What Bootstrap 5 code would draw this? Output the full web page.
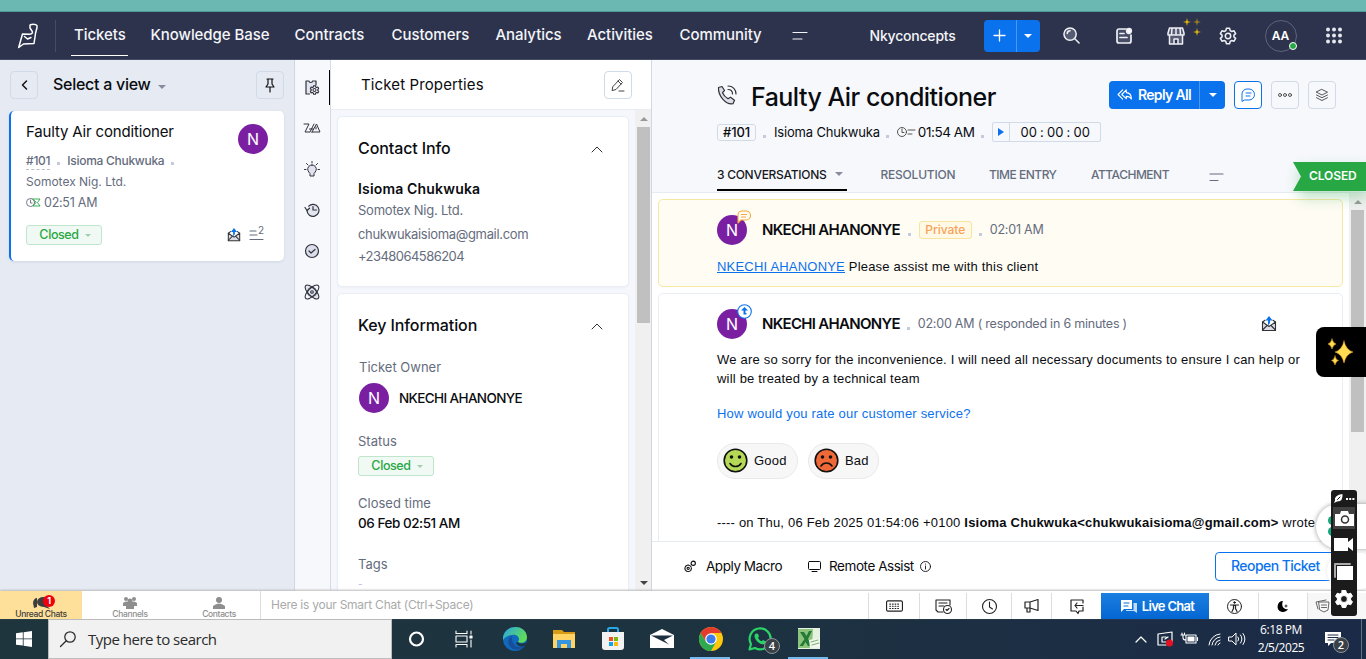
<!DOCTYPE html>
<html lang="en">
<head>
<meta charset="utf-8">
<title>Faulty Air conditioner - Ticket #101</title>
<meta name="viewport" content="width=device-width, initial-scale=1">
<link rel="stylesheet" href="https://cdn.jsdelivr.net/npm/bootstrap@5.3.0/dist/css/bootstrap.min.css">
<style>
body{width:1366px;height:659px;overflow:hidden;font:400 13px/20px Inter,"Liberation Sans",sans-serif;color:#0a0c10;background:#fff}
svg{display:block;flex:none;fill:none;stroke:currentColor;stroke-linecap:round;stroke-linejoin:round;overflow:visible}
svg:not([stroke-width]){stroke-width:1.2}
/* spacing steps between Bootstrap's */
.ml1{margin-left:1px}.ml6{margin-left:6px}.ml7{margin-left:7px}.ml8{margin-left:8px}.ml9{margin-left:9px}.ml10{margin-left:10px}.ml15{margin-left:15px}
.mt5{margin-top:5px}.mt6{margin-top:6px}.mt17{margin-top:17px}.mt18{margin-top:18px}.mt21{margin-top:21px}.mt22{margin-top:22px}
.mid{display:flex;align-items:center;justify-content:center}
.soft{color:#656c7d}
.strip{height:12px;background:#6bb8b3;border-bottom:1px solid #4f9a98}
.topbar{height:48px;background:#2d334d;color:#fff;border-bottom:1px solid #444b64}
.logo{width:56px;height:32px;border-right:1px solid #454b63;padding-left:17px}
.mainnav{display:grid;grid-template-columns:76.500px 144px 97px 104px 91.500px 92.500px 113px 30px;margin-left:18px;font-size:15px;font-weight:500;letter-spacing:-.05px;height:46px;line-height:44px;white-space:nowrap;color:#f4f5f8}
.mainnav .active{position:relative}
.mainnav .active:after{content:"";position:absolute;left:-3px;width:57px;bottom:3px;height:1px;background:#fff}
.org{width:114px;margin-left:47px;font-size:14px;font-weight:500;letter-spacing:-.2px;color:#f4f5f8}
.btn-split{display:flex;background:#0b72ed;border-radius:4px;overflow:hidden;color:#fff}
.btn-split>span+span{border-left:1px solid #4b97f3}
.btn-add{width:56px;height:32px;margin-right:6px}
.btn-add>span:first-child{width:32px}
.topic{width:52px;color:#f0f0f5;display:flex;justify-content:center}
.glints{position:absolute;left:32px;top:-10px}
.avatar-me{width:32px;height:32px;border:1px solid #5d637b;border-radius:50%;font-weight:600;font-size:12px;position:relative;margin:0 29px 0 11px}
.online{position:absolute;right:-1px;bottom:1px;width:8px;height:8px;border-radius:50%;background:#28a745;border:1px solid #fff}
.caret{width:0;height:0;border:4px solid transparent;border-top-color:#fff;border-bottom:0;flex:none}
.caret.dim{border-top-color:#868c9b}
.work{height:531px}
.listpane{width:295px;background:#e6eaf3;border-right:1px solid #cdd7e4;padding:11px 10px 0 9px}
.viewname{font-size:16px;font-weight:500;letter-spacing:-.27px;line-height:18px;padding-bottom:2px}
.sqbtn{width:28px;height:28px;border:1px solid #d1dae7;border-radius:4px;flex:none;color:#444;display:flex;align-items:center;justify-content:center}
.sqbtn.dark{color:#111}
.sqbtn.primary{border-color:#0b72ed;color:#0b72ed;background:#fff}
.ticketcard{height:150px;margin-top:12px;background:#fff;border-radius:5px;border-left:2px solid #0b72ed;padding:10px 15px 0 15px;box-shadow:0 1px 3px #cfd6e4;position:relative}
.ticketcard .subj{font-size:15px;line-height:22px;letter-spacing:-.17px}
.ticketcard .av{position:absolute;right:16px;top:13px}
.ticketcard .meta{font-size:12px;line-height:21px}
.ticketcard .who1{margin-top:8px;line-height:20px;letter-spacing:-.28px;font-weight:500;gap:7px}
.ticketcard .who1 .dot{margin-top:5px}
.ticketcard .id{border-bottom:1px dashed #b7bdcb;line-height:16px}
.ticketcard .due{gap:4px;font-size:12.500px;letter-spacing:-.25px}
.ticketcard .cardfoot{margin-top:12px}
.ticketcard .sup{font-size:10px;margin-top:-10px;margin-left:-2px}
.sentmark{margin-left:125px;color:#333}
.av{width:30px;height:30px;border-radius:50%;background:#7b1fa2;color:#fff;font-size:16px;flex:none;position:relative;display:flex;align-items:center;justify-content:center}
.dot{width:3px;height:3px;background:#c6cadf;flex:none;margin-top:8px}
.closedpill{width:76px;height:20px;border:1px solid #bfe5cb;background:#f0f9f3;border-radius:3px;color:#28a745;font-weight:500;font-size:12.500px;letter-spacing:-.4px;line-height:17px;padding:0 0 1px 2px;gap:6px}
.closedpill .caret{border-width:3px;border-bottom:0;border-top-color:#9fcfae;margin-top:2px}
.rail{width:36px;background:#f7f8fc;border-right:1px solid #d3dbe8;position:relative;padding:17px 2px 0 0;color:#30333d}
.rail>svg{margin-bottom:21px}
.rail:before{content:"";position:absolute;right:0;top:10px;height:35px;width:1px;background:#000}
.props{width:321px;background:#f5f7fc;border-right:1px solid #d0d8e6}
.props-head{height:50px;background:#fff;border-bottom:1px solid #e8edf4;padding:11px 19px 0 30px;font-size:15px;line-height:28px;letter-spacing:.12px}
.props-body{height:481px;overflow:hidden}
.props-list{padding:6px 6px 0}
.panel{width:292px;background:#fff;border:1px solid #e9eef5;border-radius:5px;padding:21px 20px 0;box-shadow:0 1px 2px #eceff5}
.panel.p1{height:171px}
.panel.p2{height:330px;margin-top:6px}
.panel h2{font-size:16px;font-weight:500;line-height:20px;margin:0;letter-spacing:-.1px}
.panel .chev{margin:2px 5px 0 0;color:#333}
.cname{font-size:14px;font-weight:600;letter-spacing:.17px}
.c1{line-height:23px;letter-spacing:-.22px}
.c2{line-height:24px;letter-spacing:-.33px}
.c3{line-height:20px;letter-spacing:-.55px}
.owner{font-weight:500;font-size:13.500px;letter-spacing:-.62px}
.ctime{font-weight:500;letter-spacing:-.46px;font-size:13.500px}
.notag{color:#b6bbdc;margin-top:5px;font-size:10px;line-height:10px}
.sbar{width:17px;background:#f0f0f0;padding:0 2px}
.arr{display:block;width:0;height:0;border:4px solid transparent;margin:3px auto 0}
.arr.au{border-bottom-color:#999}
.arr.ad{border-top-color:#444;margin:auto auto 2px}
.thumb{display:block;width:13px;background:#c0c0c0;margin-top:6px}
.thumb.t1{height:196px}.thumb.t2{height:222px}
.convo{width:714px;background:#fff;position:relative}
.convo-head{height:133px;background:#f7f8fc;border-bottom:1px solid #e6ebf3;padding:18px 0 0 65px}
.convo-head h1{font-size:25px;font-weight:500;line-height:34px;margin:3px 0 0;letter-spacing:-.52px;width:358px}
.titlerow{height:34px}
.callicon{color:#333;margin-right:14px}
.btn-reply{width:116px;height:28px;font-size:14px;font-weight:600;letter-spacing:-.68px;line-height:27px}
.btn-reply>span:first-child{display:flex;align-items:center;width:90px;padding:0 0 2px 8px;gap:6px}
.inforow{margin-top:10px;letter-spacing:-.17px}
.idchip{border:1px solid #d1dae7;border-radius:3px;height:17px;width:39px;line-height:15px;font-weight:500;text-align:center}
.ctm{font-size:13.500px;letter-spacing:-.45px}
.duei{margin:0 3px 0 8px;color:#444}
.timer{border:1px solid #d1dae7;height:20px;width:109px;line-height:18px;border-radius:2px;letter-spacing:.05px;word-spacing:-.6px;display:flex}
.timer>span:first-child{width:17px;border-right:1px solid #d1dae7;margin-right:10px}
.tabs{display:grid;grid-template-columns:163.500px 108.500px 102px 118px 20px;margin-top:13px;font-size:12px;letter-spacing:-.5px;color:#656c7d;font-weight:500;height:36px;line-height:39px;white-space:nowrap}
.tabs .active{width:130px;border-bottom:2px solid #000;color:#16181d;height:36px;padding-top:4px;letter-spacing:-.28px}
.tabs .res{letter-spacing:-.22px}
.convo-body{height:348px;overflow:hidden}
.msglist{padding:6px 0 0 6px}
.msg{width:685px;border:1px solid #e9edf4;border-radius:5px;padding:15px 42px 0 58px}
.msg.note{background:#fffcf4;border-color:#f8e7a3;height:88px}
.msg.reply{height:400px;margin-top:6px}
.msg .who{font-size:15px;font-weight:600;letter-spacing:-.7px;line-height:20px;margin-left:15px}
.msg .when{font-size:12.500px;letter-spacing:-.22px}
.reply .who{padding-bottom:1px}
.private{border:1px solid #f8e3a0;background:#fff9e6;border-radius:3px;color:#f9a15b;height:18px;line-height:16px;width:53px;font-size:12px;font-weight:500;text-align:center}
.mini{position:absolute;left:20px;top:-5px}
.mini.amber{color:#f5a93c}.mini.blue{color:#0b72ed}
.sentend{margin:0 23px 0 auto;color:#333}
.mailtext{font-family:"Liberation Sans",Arial,sans-serif;line-height:19px;letter-spacing:.2px;white-space:nowrap;margin-top:11px}
.mailtext a{color:#0b72ed}
.note .mailtext{margin-top:12px}
.ask{margin-top:16px;color:#0b72ed}
.rates{margin-top:20px;gap:10px}
.quote{margin-top:34px}
.ratebtn{height:36px;border:1px solid #e9e9e9;background:#f7f7f7;border-radius:18px;padding:0 0 1px 5px;gap:6px;display:flex;align-items:center}
.ratebtn.good{width:81px}.ratebtn.bad{width:71px}
.convo-foot{height:50px;border-top:1px solid #e5eaf1;padding:0 0 1px 32px;font-size:13.500px;position:relative;letter-spacing:-.45px;background:#fff}
.monitor{margin-left:26px}
.reopen{position:absolute;left:563px;top:10px;width:130px;height:29px;border:1px solid #0b72ed;border-radius:4px;color:#0b72ed;font-size:14px;font-weight:500;line-height:26px;padding-left:15px;letter-spacing:-.55px}
.ribbon{position:absolute;left:641px;top:102px;width:73px;height:29px;background:#28a745;clip-path:polygon(0 0,100% 0,100% 100%,0 100%,8px 50%);color:#fff;font-weight:600;font-size:12px;line-height:28px;padding-left:16px;letter-spacing:-.1px}
.ribbonglow{position:absolute;left:649px;top:105px;width:65px;height:26px;box-shadow:0 5px 14px 2px #28a7454d}
.magic{position:absolute;left:1316px;top:327px;width:50px;height:50px;border-radius:8px 0 0 8px;background:#000}
.bubble{position:absolute;left:1316px;top:504px;width:60px;height:45px;border-radius:23px 0 0 23px;background:#fff;box-shadow:0 0 5px #9a9a9a;padding:12px 0 0 12px}
.bubble2{position:absolute;left:1327px;top:553px;width:50px;height:36px;border-radius:18px;background:#fff;box-shadow:0 0 4px #e8e8e8}
.recorder{position:absolute;left:1331px;top:490px;width:26px;height:126px;border-radius:3px;background:#1b1b1b;color:#fff}
.recorder .grip{height:17px;gap:3px}
.recorder .cam{height:22px;background:#414141;margin:0 2px}
.recorder>svg{margin-left:3px}
.vid{margin-top:9px}.pics{margin-top:12px}.cog{margin-top:9px;fill:#fff}
.chatbar{height:28px;background:#fff;box-shadow:0 -1px 2px #bbb;position:relative;color:#222;overflow:hidden}
.chattab{width:82px;font-size:8.500px;line-height:10px;font-weight:500;color:#8e8e8e;letter-spacing:-.35px;padding-top:6px;text-align:center;position:relative}
.chattab.wide{width:96px}
.chattab.unread{background:#ffe09a;color:#3d3d3d}
.chattab svg{margin:0 auto}
.chattab.unread svg{transform:translateX(1px)}
.chattab .num{position:absolute;left:43px;top:4px;width:12px;height:12px;border-radius:6px;background:#f0000c;color:#fff;font-size:9px;font-weight:700;line-height:12px}
.smart{width:608px;border-left:1px solid #ddd;padding-left:10px;color:#aaa;font-size:12px;line-height:28px;letter-spacing:-.25px}
.chatcell{border-left:1px solid #ddd;height:26px;margin-top:2px;display:flex;align-items:center;justify-content:center}
.c40{width:40px}.c45{width:45px}.c47{width:47px}.c49{width:49px}.c50{width:50px}.c51{width:51px}
.chatcell.noline{border-color:transparent}
.chatcell.last{width:59px;justify-content:flex-start;padding-left:8px;background:#f7f7f7;color:#666}
.livechat{width:108px;background:linear-gradient(#1c7fe0,#0466d2);color:#fff;margin-top:2px;height:26px;font-weight:600;font-size:13px;letter-spacing:-.7px;gap:5px;padding:0 0 1px 5px}
.taskbar{height:40px;background:linear-gradient(90deg,#1e353e,#1d3340 50%,#1b2a47);font-family:"Open Sans","Noto Sans",sans-serif;color:#fff}
.startbtn{width:48px}
.wsearch{width:344px;background:#f1f1f1;border:1px solid #bcbcbc;color:#2b2b2b;font-size:15px;letter-spacing:-.5px;gap:12px;padding-left:11px}
.app{width:49px;height:40px;position:relative;display:flex;align-items:center;justify-content:center}
.app.open:after{content:"";position:absolute;left:4px;right:5px;bottom:0;height:2px;background:#76b9ed}
.cnt{position:absolute;width:16px;height:16px;border-radius:50%;background:#394047;border:1px solid #8b9398;font:600 11px/14px "Open Sans",sans-serif;text-align:center;color:#fff}
.app .cnt{left:29px;top:19px}
.notif{width:36px;margin-left:8px;position:relative}
.notif .cnt{left:8px;top:6px}
.clock{width:72px;margin-left:-1px;text-align:center;font-size:12px;line-height:18px;letter-spacing:-.42px}
.showdesk{width:1px;height:40px;background:#66717f;margin-right:4px}
</style>
</head>
<body class="d-flex flex-column">
<svg width="0" height="0" class="position-absolute">
 <symbol id="sent" viewBox="0 0 16 16"><path d="M1.500 6v8.500h13V6L8 10.500z" fill="#dcdde8"/><path d="M1.500 14l4.500-4.500M14.500 14L10 9.500M1.500 6L4 4.200M14.500 6L12 4.200"/><path d="M7 9.500V4.500H4.500L8 0l3.500 4.500H9V7z" stroke="none" fill="#0b72ed"/></symbol>
 <symbol id="up" viewBox="0 0 12 7"><path d="M1 6l5-5 5 5" stroke-width="1"/></symbol>
 <symbol id="gear" viewBox="0 0 20 20"><path d="M8.200 1.500h3.600l.6 2.500 1.800 1 2.500-.8 1.800 3.100-1.900 1.700v2l1.900 1.700-1.800 3.100-2.500-.8-1.800 1-.6 2.500H8.200l-.6-2.500-1.800-1-2.500.8-1.800-3.100L3.400 11V9L1.500 7.300l1.800-3.100 2.500.8 1.800-1z"/><circle cx="10" cy="10" r="3"/></symbol>
</svg>

<div class="strip flex-shrink-0"></div>

<header class="topbar d-flex align-items-center flex-shrink-0">
  <div class="logo d-flex align-items-center"><svg width="22" height="26" viewBox="0 0 22 26" stroke-width="1.500"><path d="M13 2.500c0-1.500 6-1.700 7 .2.6 2-1.800 7-1.700 9.300L17 20.500 6.500 21l-4.800 3.500L5.500 11l7 .3c3-.3 3.500-2 2.500-3.300L13 5z"/><path d="M7.500 13.500l3 2.500 3.500-1.500"/></svg></div>
  <nav class="mainnav">
    <span class="active">Tickets</span><span>Knowledge Base</span><span>Contracts</span><span>Customers</span><span>Analytics</span><span>Activities</span><span>Community</span>
    <span class="d-flex align-items-center"><svg width="15" height="8" stroke-width="1.200"><path d="M0 .5h14M0 7h9"/></svg></span>
  </nav>
  <div class="org">Nkyconcepts</div>
  <div class="btn-split btn-add">
    <span class="mid"><svg width="11" height="11" stroke-width="1.300"><path d="M5.500 0v11M0 5.500h11"/></svg></span>
    <span class="mid flex-fill"><i class="caret"></i></span>
  </div>
  <div class="topic"><svg width="17" height="17" viewBox="0 0 18 18" stroke-width="1.600"><circle cx="7.500" cy="7.500" r="6.500" fill="#565c74"/><path d="M12.500 12.500L17 17M4.500 7a3 3 0 0 1 3-3"/></svg></div>
  <div class="topic"><svg width="16" height="16" viewBox="0 0 16 16" stroke-width="1.700"><path d="M10 1H3a2 2 0 0 0-2 2v10a2 2 0 0 0 2 2h10a2 2 0 0 0 2-2V7" fill="#474d66"/><path d="M4 5.500h4M4 9.500h7"/><circle cx="13" cy="3" r="2.300" fill="#fff"/></svg></div>
  <div class="topic position-relative"><svg width="18" height="18" viewBox="0 0 18 18" stroke-width="1.500"><path d="M2.500 1h13L17 6v2H1V6zM2.500 9v8h13V9M7 17v-5h4v5M5 1L4.500 8M9 1v7M13 1l.5 7" fill="#565c74"/></svg>
    <svg class="glints" width="20" height="20" viewBox="0 0 20 20"><g fill="#e8b90f" stroke="none"><path d="M5 1l.8 3.200L9 5l-3.200.8L5 9l-.8-3.200L1 5l3.200-.8z"/><path opacity=".6" d="M15 1l.8 3.200L19 5l-3.200.8L15 9l-.8-3.200L11 5l3.200-.8z"/><path d="M15 11l.8 3.200 3.200.8-3.200.8L15 19l-.8-3.200L11 15l3.200-.8z"/></g></svg></div>
  <div class="topic"><svg width="18" height="18" stroke-width="1.700"><use href="#gear"/></svg></div>
  <div class="avatar-me mid">AA<i class="online"></i></div>
  <svg width="17" height="17" viewBox="0 0 17 17"><g fill="#e6e7ee" stroke="none"><circle cx="2" cy="2.500" r="2"/><circle cx="8" cy="2.500" r="2"/><circle cx="14" cy="2.500" r="2"/><circle cx="2" cy="8.500" r="2"/><circle cx="8" cy="8.500" r="2"/><circle cx="14" cy="8.500" r="2"/><circle cx="2" cy="14.500" r="2"/><circle cx="8" cy="14.500" r="2"/><circle cx="14" cy="14.500" r="2"/></g></svg>
</header>

<main class="work d-flex flex-shrink-0">
  <aside class="listpane flex-shrink-0">
    <div class="d-flex align-items-center">
      <span class="sqbtn dark ml1"><svg width="5" height="8" stroke-width="1.500"><path d="M4.500 0l-4 4 4 4"/></svg></span>
      <span class="viewname ml15">Select a view</span>
      <i class="caret dim ml7 mt-1"></i>
      <span class="sqbtn dark ms-auto"><svg width="10" height="15" viewBox="0 0 10 15" stroke-width="1.200"><path d="M2 1h6M3 1v5L1 9h8L7 6V1M5 9v5"/></svg></span>
    </div>
    <article class="ticketcard">
      <div class="subj">Faulty Air conditioner</div>
      <div class="av">N</div>
      <div class="meta who1 d-flex align-items-center soft"><span class="id">#101</span><i class="dot"></i><span>Isioma Chukwuka</span><i class="dot"></i></div>
      <div class="meta soft">Somotex Nig. Ltd.</div>
      <div class="meta due d-flex align-items-center soft"><svg width="14" height="9" viewBox="0 0 14 9" stroke-width=".9"><circle cx="4.500" cy="4.500" r="4"/><path d="M4.500 2v3H6"/><path d="M7 1h7l-2.500 3.500L14 8H7l3-3.500z" stroke="#28a745"/></svg>02:51 AM</div>
      <div class="cardfoot d-flex align-items-center">
        <span class="closedpill mid">Closed<i class="caret"></i></span>
        <svg class="sentmark" width="14" height="14" stroke-width="1.200"><use href="#sent"/></svg>
        <svg width="10" height="10" class="ml9 soft" stroke-width="1.100"><path d="M0 1h6M0 5h7M0 9.500h13"/></svg><span class="sup soft">2</span>
      </div>
    </article>
  </aside>

  <nav class="rail flex-shrink-0 d-flex flex-column align-items-center">
    <svg width="16" height="20" viewBox="0 0 16 20" stroke-width="1.200"><path d="M5.500 17H2V4h3c0 2 3.500 2 3.500 0H12v4" fill="#e3e5ef"/><g transform="translate(5.500 8) scale(.5)" stroke-width="2.200"><use href="#gear" width="20" height="20"/></g></svg>
    <svg width="16" height="20" viewBox="0 0 16 20" stroke-width="1"><path d="M0 6h5L1 14h4.500M6 14l4-8M5.500 11h4M8 14l4.500-8L16 14H8zM12 9v2"/></svg>
    <svg width="16" height="20" viewBox="0 0 16 20" stroke-width="1"><path d="M8 6a4 4 0 0 0-4 5.500q.5 1.500 2 3V17h4v-2.500q1.500-1.500 2-3A4 4 0 0 0 8 6z" fill="#e0e2ee"/><path d="M8 4V2.500M4 6L2.500 4.500M12 6l1.500-1.500M2 10.500H.5M15.500 10.500H14"/></svg>
    <svg width="16" height="20" viewBox="0 0 16 20" stroke-width="1.200"><path d="M3 10.500a6 6 0 1 0 1.700-4.300" fill="#e3e5ef"/><path d="M9 6.500V10h3.500M1 7.500l2 3 2.500-2.300"/></svg>
    <svg width="16" height="20" viewBox="0 0 16 20" stroke-width="1.200"><circle cx="8" cy="10" r="6.500" fill="#dcdeeb"/><path d="M5 10l2 2 4-3.500"/></svg>
    <svg width="16" height="20" viewBox="0 0 16 20" stroke-width="1.100"><ellipse cx="8" cy="10" rx="9" ry="3.800" transform="rotate(45 8 10)" fill="#e3e5ef"/><ellipse cx="8" cy="10" rx="9" ry="3.800" transform="rotate(-45 8 10)"/><circle cx="8" cy="10" r="4.500"/><circle cx="8" cy="10" r="1.300"/></svg>
  </nav>

  <section class="props flex-shrink-0">
    <div class="props-head d-flex justify-content-between"><span>Ticket Properties</span><span class="sqbtn"><svg width="14" height="14" viewBox="0 0 14 14" stroke-width="1"><path d="M2 8.500l6.500-7 3 3L5 11.500l-3.500 1zM7 3l3 3M8 13h5"/></svg></span></div>
    <div class="props-body d-flex">
      <div class="props-list">
        <div class="panel p1">
          <div class="d-flex align-items-center justify-content-between"><h2>Contact Info</h2><svg class="chev" width="12" height="7"><use href="#up"/></svg></div>
          <div class="cname mt21">Isioma Chukwuka</div>
          <div class="soft c1">Somotex Nig. Ltd.</div>
          <div class="soft c2">chukwukaisioma@gmail.com</div>
          <div class="soft c3">+2348064586204</div>
        </div>
        <div class="panel p2">
          <div class="d-flex align-items-center justify-content-between"><h2>Key Information</h2><svg class="chev" width="12" height="7"><use href="#up"/></svg></div>
          <div class="soft mt22 ml1">Ticket Owner</div>
          <div class="d-flex align-items-center mt6 ml1"><span class="av">N</span><span class="owner ml10">NKECHI AHANONYE</span></div>
          <div class="soft mt18">Status</div>
          <span class="closedpill mid mt5">Closed<i class="caret"></i></span>
          <div class="soft mt17">Closed time</div>
          <div class="ctime">06 Feb 02:51 AM</div>
          <div class="soft mt21">Tags</div>
          <div class="notag">-</div>
        </div>
      </div>
      <div class="sbar d-flex flex-column ms-auto"><i class="arr au"></i><i class="thumb t1"></i><i class="arr ad"></i></div>
    </div>
  </section>

  <section class="convo flex-shrink-0">
    <div class="convo-head">
      <div class="titlerow d-flex align-items-center">
        <svg class="callicon" width="20" height="20" viewBox="0 0 20 20" stroke-width="1.200"><path d="M1.500 2.500L5 1.500l2.500 4-2 2.200c1 2.500 3 4.500 5.500 6l2.500-1.500 4 3-1.500 3.500C8.500 20 1 10.500 1.500 2.500z" fill="#dcdfeb"/><path d="M11 1c5 0 8 3.500 8 8M11 4.500c3 0 4.500 2 4.500 4.500"/></svg>
        <h1>Faulty Air conditioner</h1>
        <div class="btn-split btn-reply">
          <span><svg width="15" height="11" viewBox="0 0 16 12" stroke-width="1.200"><path d="M6 1L1 6l5 5M10 1L5 6l5 4.500V8c3 0 4.500 1 5.500 3 0-4-2-7-5.500-7z"/></svg>Reply All</span><span class="mid flex-fill"><i class="caret"></i></span></div>
        <span class="sqbtn primary ml9"><svg width="14" height="14" viewBox="0 0 14 14" stroke-width="1"><path d="M1 13V6a5 5 0 0 1 5-5h2a5 5 0 0 1 0 11H4zM5 5h5M5 8h4"/></svg></span>
        <span class="sqbtn ml9"><svg width="14" height="4" stroke-width=".9"><circle cx="2" cy="2" r="1.500"/><circle cx="7" cy="2" r="1.500"/><circle cx="12" cy="2" r="1.500"/></svg></span>
        <span class="sqbtn ml9"><svg width="12" height="12" viewBox="0 0 12 12" stroke-width=".9"><path d="M6 .5l5.500 2.700L6 6 .5 3.200zM.5 6L6 8.700 11.500 6M.5 8.700L6 11.500l5.500-2.800"/></svg></span>
      </div>
      <div class="inforow d-flex align-items-center">
        <span class="idchip">#101</span><i class="dot ml7"></i><span class="ml8">Isioma Chukwuka</span><i class="dot ml6"></i>
        <svg class="duei" width="18" height="10" viewBox="0 0 18 10" stroke-width=".9"><circle cx="5" cy="5" r="4.500"/><path d="M5 2v3.500H7M11 3h7M11 7h4"/></svg><span class="ctm">01:54 AM</span><i class="dot ml7 me-2"></i>
        <span class="timer"><span class="mid"><svg width="6" height="8"><path d="M0 0l6 4-6 4z" fill="#0b72ed" stroke="none"/></svg></span>00 : 00 : 00</span>
      </div>
      <div class="tabs">
        <span class="active d-flex align-items-center">3 CONVERSATIONS<i class="caret dim ml9"></i></span><span class="res">RESOLUTION</span><span>TIME ENTRY</span><span>ATTACHMENT</span><span class="d-flex align-items-center pt-1"><svg width="14" height="8" stroke-width="1.100"><path d="M1 1h13M1 7.500h8"/></svg></span>
      </div>
    </div>
    <div class="ribbonglow"></div><div class="ribbon">CLOSED</div>
    <div class="convo-body d-flex">
      <div class="msglist">
        <article class="msg note">
          <div class="d-flex align-items-center"><span class="av">N<svg class="mini amber" width="14" height="13" viewBox="0 0 14 13" stroke-width="1.100"><path d="M1 13V5a4 4 0 0 1 4-4h4a4 4 0 0 1 0 9H4z" fill="#fffcf4"/><path d="M4.500 4.500h5M4.500 7h4"/></svg></span><span class="who">NKECHI AHANONYE</span><i class="dot ml8"></i>
          <span class="private ml8">Private</span><i class="dot ml7 me-2"></i><span class="when soft">02:01 AM</span></div>
          <div class="mailtext"><a href="#">NKECHI AHANONYE</a> Please assist me with this client</div>
        </article>
        <article class="msg reply">
          <div class="d-flex align-items-center"><span class="av">N<svg class="mini blue" width="15" height="15" viewBox="0 0 15 15" stroke-width="1.100"><circle cx="7.500" cy="7.500" r="6.800" fill="#fff"/><path d="M7.500 3L4 6.500h2.500V10.500h3V9h-1V6.500H11z" fill="#0b72ed" stroke="none"/></svg></span><span class="who">NKECHI AHANONYE</span><i class="dot ml7"></i><span class="when soft ml8">02:00 AM ( responded in 6 minutes )</span><svg width="16" height="16" class="sentend" stroke-width="1.100"><use href="#sent"/></svg></div>
          <div class="mailtext">We are so sorry for the inconvenience. I will need all necessary documents to ensure I can help or<br>will be treated by a technical team</div>
          <div class="mailtext ask">How would you rate our customer service?</div>
          <div class="mailtext rates d-flex">
            <span class="ratebtn good"><svg width="25" height="25" viewBox="0 0 25 25" color="#111" stroke-width="1.600"><circle cx="12.500" cy="12.500" r="11.300" fill="#b5d957"/><path d="M7 15.500c2.500 4 8.500 4 11 0"/><circle cx="8.500" cy="9" r="1" fill="#111"/><circle cx="16.500" cy="9" r="1" fill="#111"/></svg>Good</span>
            <span class="ratebtn bad"><svg width="25" height="25" viewBox="0 0 25 25" color="#111" stroke-width="1.600"><circle cx="12.500" cy="12.500" r="11.300" fill="#ee6937"/><path d="M7 18c2.500-4 8.500-4 11 0"/><circle cx="8.500" cy="9" r="1" fill="#111"/><circle cx="16.500" cy="9" r="1" fill="#111"/></svg>Bad</span>
          </div>
          <div class="mailtext quote">---- on Thu, 06 Feb 2025 01:54:06 +0100 <b>Isioma Chukwuka&lt;chukwukaisioma@gmail.com&gt;</b> wrote</div>
        </article>
      </div>
      <div class="sbar ms-auto"><i class="arr au"></i><i class="thumb t2"></i></div>
    </div>
    <div class="convo-foot d-flex align-items-center">
      <svg width="12" height="13" viewBox="0 0 13 13" stroke-width="1.200"><circle cx="4.500" cy="8.500" r="3.500" stroke-dasharray="2 1"/><circle cx="4.500" cy="8.500" r="1.200"/><circle cx="10" cy="3" r="2.300"/></svg><span class="ml10">Apply Macro</span>
      <svg class="monitor" width="13" height="11" viewBox="0 0 13 11" stroke-width="1"><rect x=".5" y=".5" width="12" height="8" rx="1"/><path d="M4 10.500h5"/></svg><span class="ml8">Remote Assist</span>
      <svg class="ml6" width="11" height="11" stroke-width=".9"><circle cx="5.500" cy="5.500" r="5"/><path d="M5.500 5v3M5.500 3v.2"/></svg>
      <span class="reopen">Reopen Ticket</span>
    </div>
  </section>
</main>

<div class="chatbar d-flex flex-shrink-0">
  <div class="chattab unread"><svg width="18" height="12" viewBox="0 0 18 12"><g fill="#3d3d3d" stroke="none"><path d="M0 6c0-3 2-5 4-5v9l-3 1z"/><ellipse cx="10.500" cy="5" rx="6.500" ry="5"/><path d="M13 8l4 4-6-2z"/></g></svg>Unread Chats<span class="num">1</span></div>
  <div class="chattab wide"><svg width="14" height="12" viewBox="0 0 14 12"><g fill="#8e8e8e" stroke="none"><circle cx="3" cy="2" r="2"/><circle cx="11" cy="2" r="2"/><circle cx="7" cy="4" r="2.500"/><path d="M0 9V6q3-3 7 0 4-3 7 0v3l-3 0v3H3V9z"/></g></svg>Channels</div>
  <div class="chattab"><svg width="14" height="12" viewBox="0 0 14 12"><g fill="#8e8e8e" stroke="none"><circle cx="7" cy="3" r="3"/><path d="M1 12V9q6-5 12 0v3z"/></g></svg>Contacts</div>
  <div class="smart">Here is your Smart Chat (Ctrl+Space)</div>
  <div class="chatcell c51"><svg width="17" height="12" viewBox="0 0 18 12" stroke-width="1.200"><rect x=".6" y=".6" width="16.800" height="10.800" rx="1.500"/><path d="M4 4h11M4 6.300h11M4 8.600h11" stroke-dasharray=".8 2" stroke-width="1.200"/></svg></div>
  <div class="chatcell c47"><svg width="17" height="15" viewBox="0 0 17 15" stroke-width="1.100"><path d="M8 13H3L1 11V1h14v5M4 4h8M4 7h5"/><circle cx="12.500" cy="10.500" r="4"/><path d="M11 10.500l1 1 2-2"/></svg></div>
  <div class="chatcell c45"><svg width="15" height="15" stroke-width="1.100"><circle cx="7.500" cy="7.500" r="7"/><path d="M7.500 3v5l3 2"/></svg></div>
  <div class="chatcell c40"><svg width="16" height="14" viewBox="0 0 16 14" stroke-width="1.200"><path d="M1 3h5l8-2.500v11L6 9H1zM3 9v4h3V9M6 3v6"/></svg></div>
  <div class="chatcell c50"><svg width="14" height="15" viewBox="0 0 14 15" stroke-width="1.200"><path d="M13 4V1H1v11h5l2 2.500L9 12h4V8M7 4L5 6.500 7 9M5 6.500h8"/></svg></div>
  <div class="livechat mid"><svg width="16" height="14" viewBox="0 0 16 14"><g fill="#fff" stroke="none"><path d="M0 1h11v9H3l-3 3z"/><path d="M12.500 4H16v10l-3-2H5v-1h7.500z" opacity=".75"/></g><path d="M3 4h5M3 7h4" stroke="#0b6fd9"/></svg>Live Chat</div>
  <div class="chatcell noline c49"><svg width="15" height="15" stroke-width="1"><circle cx="7.500" cy="7.500" r="7"/><circle cx="7.500" cy="3.500" r=".8" fill="#222"/><path d="M3.500 6h8M6.500 6.500h2v3L10 12.500M6.500 6.500v3L5 12.500" stroke-width="1.200"/></svg></div>
  <div class="chatcell c49"><svg width="12" height="12" viewBox="0 0 12 12" stroke-width="1"><path d="M6 1a5.500 5.500 0 1 0 5 8C6 10 4 5 6 1z" fill="#000" stroke="none"/><path d="M9 5v2M8 6h2"/></svg></div>
  <div class="chatcell last"><svg width="14" height="14" viewBox="0 0 14 14" stroke-width="1"><path d="M2 10L0 3l10-2M3 3h10l-1 8-4 2-4-2zM5.500 6h5M5.500 8.500h5"/></svg></div>
</div>

<footer class="taskbar d-flex flex-shrink-0">
  <div class="startbtn mid"><svg width="16" height="16" viewBox="0 0 16 16"><g fill="#fff" stroke="none"><path d="M0 2.200L6.800 1.300V7.500H0zM7.600 1.200L16 0v7.500H7.600zM0 8.300h6.800v6.300L0 13.700zM7.600 8.300H16V16l-8.400-1.200z"/></g></svg></div>
  <div class="wsearch d-flex align-items-center"><svg width="16" height="16" viewBox="0 0 16 16" stroke-width="1.300"><circle cx="10" cy="6" r="5.200"/><path d="M6.300 9.700L.5 15.500"/></svg>Type here to search</div>
  <div class="app"><svg width="16" height="16" stroke-width="2.200"><circle cx="7.500" cy="8" r="6.500"/></svg></div>
  <div class="app"><svg width="17" height="16" viewBox="0 0 17 16" stroke-width="1.100"><path d="M-1 0v2.500H10V0M-1 16v-2.500H10V16M-1 5H10v6H-1zM14 0v3M14 9v7"/><path d="M13 5h2v2h-2z" fill="#fff"/></svg></div>
  <div class="app"><svg width="24" height="24" viewBox="0 0 24 24"><defs><linearGradient id="eg" x2="1" y2=".5"><stop stop-color="#2aa5e6"/><stop offset="1" stop-color="#5fdc58"/></linearGradient></defs><g stroke="none"><circle cx="12" cy="12" r="12" fill="#1069bd"/><path d="M0 11C1-3 23-4 24 10c0 5-5 7-9 5 3-4-1-8-6-7-4 0-7 2-9 5z" fill="url(#eg)"/><path d="M9 9c-5 2-5 10 1 13 4 2 9 0 12-3-6 3-14 0-13-10z" fill="#174e9c"/><path d="M14.500 15c2 2 5.500 2 9 0l-1.500 4q-7 1.500-9-3z" fill="#1b3347"/></g></svg></div>
  <div class="app"><svg width="22" height="19" viewBox="0 0 22 19"><g stroke="none"><path d="M0 0h9l2 2h11v16H0z" fill="#d99a16"/><path d="M0 4h22v14H0z" fill="#ffd464"/><path d="M4 18v-8h14v8h-4v-4H8v4z" fill="#3496e0"/></g></svg></div>
  <div class="app"><svg width="24" height="24" viewBox="0 0 24 24"><path d="M7 6V2.500Q7 1 8.500 1h7Q17 1 17 2.500V6" stroke="#25a8e8" stroke-width="2"/><g stroke="none"><path d="M1 5h22v15q0 3-3 3H4q-3 0-3-3z" fill="#f2f2f2"/><path d="M8 10h4v4H8z" fill="#f04f23"/><path d="M13 10h4v4h-4z" fill="#7cb810"/><path d="M8 15h4v4H8z" fill="#0ca5ec"/><path d="M13 15h4v4h-4z" fill="#fdb908"/></g></svg></div>
  <div class="app"><svg width="24" height="20" viewBox="0 0 24 20"><g stroke="none"><path d="M0 6L12 0l12 6v13H0z" fill="#fff"/><path d="M1 6.500h22L14 11l5 4.500z" fill="#1c3040"/></g></svg></div>
  <div class="app open"><svg width="24" height="24" viewBox="0 0 24 24"><g stroke="none"><circle cx="12" cy="12" r="12" fill="#fdc70c"/><path d="M1.600 6A12 12 0 0 1 22.400 6H12L7 15z" fill="#e33b2e"/><path d="M1.600 6A12 12 0 0 0 12 24l5-9-5 2.500L7 15z" fill="#2da94f"/><circle cx="12" cy="12" r="5.800" fill="#fff"/><circle cx="12" cy="12" r="4.600" fill="#3b7ded"/></g></svg></div>
  <div class="app"><svg width="24" height="24" viewBox="0 0 24 24" stroke-width="2.200"><path d="M1.500 22.500L3 17A10.500 10.500 0 1 1 7 21z" stroke="#2bd366"/><path d="M8 6.500l2 .2 1 2.800-1 1.200c1 2 2 2.700 3.700 3.500L15 13l3 1.500c0 2-1.500 3-3.500 2.800C10.500 17 6.500 12 6.500 9c0-1 .5-2 1.500-2.500z" fill="#2bd366" stroke="none"/></svg><span class="cnt">4</span></div>
  <div class="app open"><svg width="22" height="22" viewBox="0 0 22 22"><g stroke="none"><path d="M0 0h22v21H0z" fill="#e6f2e0"/><path d="M0 1h15l-1 19H0z" fill="#8cc47d"/><path d="M2 4h4l2.500 4L11 3h3l-4 8 4 7h-4l-2.500-4L5 18H1.500l5-7z" fill="#257b35"/><path d="M11 12l11-2v9l-10 1z" fill="#f2f8ef"/></g><path d="M13 14l7-2M14 17l7-2" stroke="#7db574"/></svg></div>
  <div class="ms-auto d-flex align-items-center">
    <svg width="12" height="7" viewBox="0 0 12 7"><path d="M1 6l5-5 5 5"/></svg>
    <svg class="ml10" width="17" height="16" viewBox="0 0 17 16"><path d="M1 3l14-2v10M1 3v11h8M5 6v5h4M6 6h3M8 8l3-2"/><circle cx="12.500" cy="12" r="3.500" fill="#e81123" stroke="none"/></svg>
    <svg class="ml7" width="17" height="12" viewBox="0 0 17 12" stroke-width="1.100"><path d="M5 2h10v8H5zM16.500 4.500v3M0 2h4M1 0v2M3.500 0v2M2 2v3q0 2 3 2"/><path d="M7 4h6v4H7z" fill="#fff"/></svg>
    <svg class="ml10" width="14" height="14" viewBox="0 0 14 14" stroke-width="1"><path d="M1 13A12 12 0 0 1 12 2M4 13a9 9 0 0 1 8-8M7 13a6 6 0 0 1 5-5M10 13a3 3 0 0 1 2-2"/></svg>
    <svg class="ml7" width="17" height="14" viewBox="0 0 17 14" stroke-width="1"><path d="M0 5h3l4-4v12L3 9H0zM9 5q1.500 2 0 4M11.500 3q3 4 0 8M14 1.500q4 5.500 0 11"/></svg>
    <div class="clock">6:18 PM<br>2/5/2025</div>
    <div class="notif"><svg width="16" height="16" viewBox="0 0 16 16"><path d="M0 1h16v11H6l-3 3v-3H0z" fill="#fff" stroke="none"/><path d="M3 4h10M3 6.500h10M3 9h6" stroke="#1b2a47" stroke-width="1"/></svg><span class="cnt">2</span></div>
    <i class="showdesk"></i>
  </div>
</footer>

<div class="magic mid"><svg width="28" height="28" viewBox="0 0 28 28" stroke-width=".5"><g fill="#ffdc52" stroke="#eda224"><path d="M17 3q2 9 9 11-7 2-9 11-2-9-9-11 7-2 9-11z"/><path d="M5 1q1 4 4 5-3 1-4 5-1-4-4-5 3-1 4-5z"/><path d="M8 18q1 4 3.500 4.500Q9 23 8 27q-1-4-3.500-4.500Q7 22 8 18z"/></g></svg></div>
<div class="bubble"><svg width="32" height="22"><g fill="#12a97c" stroke="none"><rect width="29" height="9" rx="4.500"/><rect y="11" width="29" height="9" rx="4.500"/></g></svg></div>
<div class="bubble2"></div>
<div class="recorder">
  <div class="grip mid"><svg width="9" height="9" viewBox="0 0 9 9"><path d="M0 9l1-2.500Q0 1 8.500 0 9 8 3 7.500z" fill="#fff" stroke="none"/><path d="M3.500 5.500l2.500-2.500" stroke="#111" stroke-width="1"/></svg><svg width="9" height="2"><g fill="#fff" stroke="none"><path d="M0 0h2v2H0zM3.200 0h2v2h-2zM6.400 0h2v2h-2z"/></g></svg></div>
  <div class="cam mid"><svg width="19" height="15" viewBox="0 0 19 15" stroke-width="1.500"><path d="M0 3h5l1-3h7l1 3h5v12H0z" fill="#fff" stroke="none"/><circle cx="10" cy="8.500" r="3.500" stroke="#333"/></svg></div>
  <svg class="vid" width="20" height="13"><path d="M0 0h14v4l5-4v13l-5-4v4H0z" fill="#fff" stroke="none"/></svg>
  <svg class="pics" width="19" height="17"><path d="M1 14V1h15" stroke="#aaa" stroke-width="2"/><path d="M3 3h16v14H3z" fill="#fff" stroke="none"/></svg>
  <svg class="cog" width="20" height="20" viewBox="0 0 20 20" stroke-width="1"><use href="#gear"/><circle cx="10" cy="10" r="3.500" fill="#1b1b1b"/></svg>
</div>
<script src="https://cdn.jsdelivr.net/npm/bootstrap@5.3.0/dist/js/bootstrap.bundle.min.js"></script>
</body>
</html>
